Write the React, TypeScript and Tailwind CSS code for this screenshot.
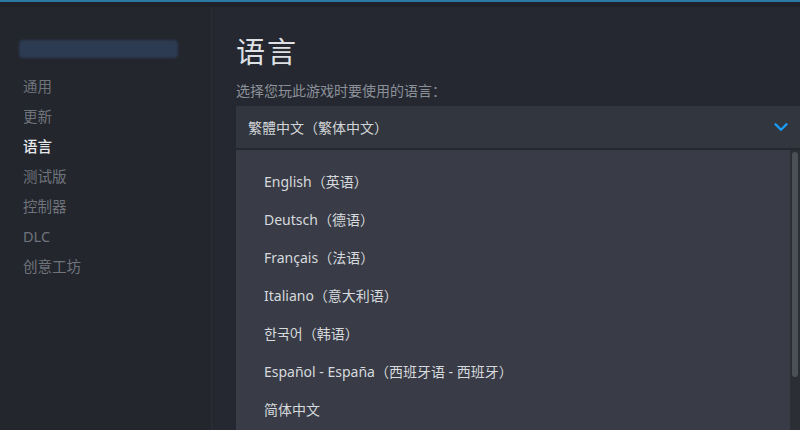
import { ChevronDown } from "lucide-react";

const navItems = ["通用", "更新", "语言", "测试版", "控制器", "DLC", "创意工坊"];

const languages = [
  "English（英语）",
  "Deutsch（德语）",
  "Français（法语）",
  "Italiano（意大利语）",
  "한국어（韩语）",
  "Español - España（西班牙语 - 西班牙）",
  "简体中文",
];

export default function App() {
  return (
    <div
      className="w-[800px] h-[430px] overflow-hidden flex flex-col bg-[#252830]"
      style={{ fontFamily: '"Noto Sans", "Noto Sans CJK SC", "Noto Sans CJK KR", sans-serif' }}
    >
      {/* top accent */}
      <div className="h-[2px] bg-[#2a7aa6]" />
      <div className="h-[5px] bg-[#1f2228]" />

      <div className="flex flex-1 min-h-0">
        {/* Sidebar */}
        <aside className="w-[212px] shrink-0 bg-[#23262d] border-r border-[#2b2e35] pt-[33px] pl-[19px]">
          <div className="w-[159px] h-[18px] rounded-sm bg-[#2c3a52] blur-[1px]" />
          <nav className="mt-[14px] pl-[4px] flex flex-col">
            {navItems.map((item) => (
              <div
                key={item}
                className={`h-[30px] flex items-center text-[14.5px] ${
                  item === "语言" ? "text-[#e6e8ea] font-medium" : "text-[#6f747c]"
                }`}
              >
                {item}
              </div>
            ))}
          </nav>
        </aside>

        {/* Main */}
        <main className="flex-1 min-w-0 pt-[27px] pl-[24px] flex flex-col">
          <h1 className="text-[29px] leading-[36px] text-[#dfe1e4] tracking-[2px]">语言</h1>
          <p className="mt-[12px] text-[14px] leading-[18px] text-[#8b9099]">选择您玩此游戏时要使用的语言：</p>

          <div className="mt-[6px] h-[42px] bg-[#32363e] flex items-center justify-between pl-[12px] pr-[8px] text-[14px] text-[#d3d6da]">
            <span>繁體中文（繁体中文）</span>
            <ChevronDown className="w-[22px] h-[22px] text-[#1a9fff]" strokeWidth={2.6} />
          </div>

          {/* Dropdown list */}
          <div className="mt-[2px] flex-1 flex min-h-0">
            <div className="flex-1 bg-[#393c46] pt-[12px] pl-[28px]">
              {languages.map((lang) => (
                <div key={lang} className="h-[38px] flex items-center text-[14px] text-[#d6d9dd]">
                  {lang}
                </div>
              ))}
            </div>
            <div className="w-[10px] bg-[#2b2e35] pt-[2px] flex justify-center">
              <div className="w-[6px] h-[225px] rounded-[3px] bg-[#4b4f58]" />
            </div>
          </div>
        </main>
      </div>
    </div>
  );
}
